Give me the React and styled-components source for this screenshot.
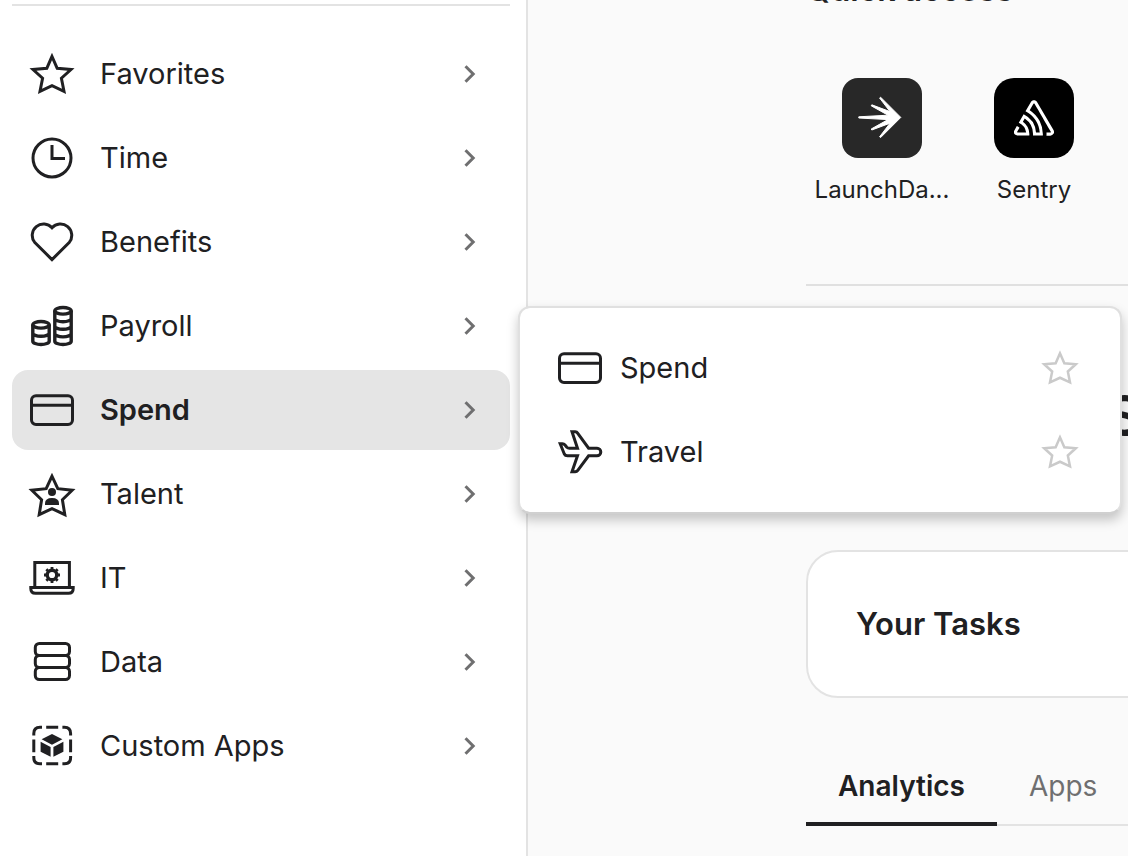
import React from "react";
import styled, { createGlobalStyle, css } from "styled-components";
import { SiSentry } from "react-icons/si";

const GlobalStyle = createGlobalStyle`
  *, *::before, *::after { box-sizing: border-box; }
  body {
    margin: 0;
    background: #fafafa;
    color: #202022;
    font-family: Inter, "Liberation Sans", sans-serif;
    font-size: 29px;
    line-height: 40px;
  }
  a { color: inherit; text-decoration: none; }
  button { font: inherit; color: inherit; background: none; border: 0; padding: 0; cursor: pointer; }
  h1, h2, ul { margin: 0; padding: 0; }
  ul { list-style: none; }
`;

const Page = styled.div`
  display: flex;
  min-height: 100vh;
  overflow: hidden;
`;

const Sidebar = styled.aside`
  flex: none;
  width: 528px;
  padding: 4px 16px 28px 12px;
  background: #fff;
  border-right: 2px solid #e3e3e3;
`;

const NavList = styled.ul`
  display: flex;
  flex-direction: column;
  gap: 4px;
  padding-top: 28px;
  border-top: 2px solid #e3e3e3;
`;

const NavItem = styled.li`
  position: relative;
`;

const NavButton = styled.button`
  display: flex;
  align-items: center;
  gap: 24px;
  width: 100%;
  height: 80px;
  padding: 0 16px;
  border-radius: 16px;
  text-align: left;
  ${(p) => p.$active && css`
    background: #e5e5e5;
    font-weight: 600;
  `}
`;

const Label = styled.span`
  flex: 1;
`;

const Glyph = styled.svg`
  flex: none;
  width: ${(p) => p.$size || 48}px;
  height: ${(p) => p.$size || 48}px;
  fill: none;
  stroke: currentColor;
  stroke-width: 3;
`;

const Chevron = styled(Glyph)`
  color: #6f6f70;
`;

const Flyout = styled.ul`
  position: absolute;
  z-index: 2;
  top: -64px;
  left: calc(100% + 8px);
  width: 604px;
  display: flex;
  flex-direction: column;
  gap: 4px;
  padding: 20px 16px;
  background: #fff;
  background-clip: padding-box;
  border: 2px solid #e0e0e0;
  border-bottom-color: #d0d0d0;
  border-radius: 12px;
  box-shadow: 0 6px 12px rgba(0, 0, 0, 0.22);
`;

const FlyoutItem = styled.li`
  display: flex;
  align-items: center;
  height: 80px;
  padding: 0 24px 0 20px;
`;

const FlyoutLink = styled.a`
  flex: 1;
  display: flex;
  align-items: center;
  gap: 16px;
`;

const StarButton = styled.button`
  display: flex;
  color: #cacaca;
`;

const Main = styled.main`
  flex: 0 0 100%;
  margin-top: -30px;
  padding-left: 278px;
`;

const SectionTitle = styled.h2`
  font-size: 32px;
  line-height: 40px;
  font-weight: 600;
`;

const AppGrid = styled.div`
  display: flex;
  padding: 68px 0 78px;
  border-bottom: 2px solid #e0e0e0;
`;

const AppLink = styled.a`
  display: flex;
  flex-direction: column;
  align-items: center;
  gap: 16px;
  width: 152px;
`;

const AppTile = styled.span`
  display: flex;
  align-items: center;
  justify-content: center;
  width: 80px;
  height: 80px;
  color: #fff;
  background: ${(p) => p.$color};
  border-radius: ${(p) => p.$radius}px;
`;

const AppName = styled.span`
  font-size: 24px;
  line-height: 32px;
  white-space: nowrap;
`;

const PageTitle = styled.h1`
  padding: 98px 0 102px 300px;
  font-size: 56px;
  line-height: 64px;
  font-weight: 600;
`;

const Card = styled.section`
  padding: 48px;
  background: #fff;
  border: 2px solid #e3e3e3;
  border-radius: 32px;
`;

const CardTitle = styled.h2`
  font-size: 31px;
  line-height: 48px;
  font-weight: 600;
`;

const Tabs = styled.div`
  display: flex;
  margin-top: 52px;
  box-shadow: inset 0 -2px #e3e3e3;
`;

const Tab = styled.button`
  padding: 16px 32px;
  border-bottom: 4px solid ${(p) => (p.$active ? "#202022" : "transparent")};
  color: ${(p) => (p.$active ? "#202022" : "#6f6f70")};
  font-size: 28px;
  font-weight: ${(p) => (p.$active ? 600 : 400)};
`;

const Icon = ({ size, children }) => (
  <Glyph viewBox="0 0 48 48" $size={size} aria-hidden="true">{children}</Glyph>
);

const STAR =
  "M24 6.4 L18.8 18.3 L5 19.5 L14.6 28.2 L12 41.3 L24 35.7 L36 41.3 L33.4 28.2 L43 19.5 L29.2 18.3 Z";

const StarIcon = ({ size }) => (
  <Icon size={size}><path d={STAR} /></Icon>
);

const ClockIcon = () => (
  <Icon>
    <circle cx="24" cy="24" r="19" />
    <path d="M24 11 V24.5 H37" />
  </Icon>
);

const HeartIcon = () => (
  <Icon>
    <path d="M24 41.6 L6.6 24.2 A11.3 11.3 0 0 1 24 9.8 A11.3 11.3 0 0 1 41.4 24.2 Z" />
  </Icon>
);

const CoinsIcon = () => (
  <Icon>
    <g strokeWidth="3.4">
      <ellipse cx="13" cy="22.8" rx="8.2" ry="3.3" />
      <path d="M4.8 22.8 V39.2 A8.2 3.3 0 0 0 21.2 39.2 V22.8 M4.8 31 A8.2 3.3 0 0 0 21.2 31" />
      <ellipse cx="35" cy="8.8" rx="8.2" ry="3.3" />
      <path d="M26.8 8.8 V39.2 A8.2 3.3 0 0 0 43.2 39.2 V8.8 M26.8 16.4 A8.2 3.3 0 0 0 43.2 16.4 M26.8 24 A8.2 3.3 0 0 0 43.2 24 M26.8 31.6 A8.2 3.3 0 0 0 43.2 31.6" />
    </g>
  </Icon>
);

const CardIcon = () => (
  <Icon>
    <rect x="3.5" y="9.8" width="41" height="28.6" rx="4.5" />
    <path d="M3.5 19.3 H44.5" />
  </Icon>
);

const TalentIcon = () => (
  <Icon>
    <path d="M24 6.2 L18.2 18.7 L3.8 20.2 L13.6 29.8 L11.2 44.6 L24 38.6 L36.8 44.6 L34.4 29.8 L44.2 20.2 L29.8 18.7 Z" />
    <circle cx="24" cy="22" r="4" fill="currentColor" stroke="none" />
    <path d="M17 35 V33.5 Q17 28 24 28 Q31 28 31 33.5 V35 Z" fill="currentColor" stroke="none" />
  </Icon>
);

const LaptopIcon = () => (
  <Icon>
    <path d="M6.8 33 V8.5 H41.4 V33" />
    <path d="M2.8 33.5 H45.2 V34.5 Q45.2 39.3 40.5 39.3 H7.5 Q2.8 39.3 2.8 34.5 Z" />
    <circle cx="24" cy="21" r="4.8" strokeWidth="3.4" />
    {[0, 45, 90, 135].map((angle) => (
      <path key={angle} d="M24 13 V16 M24 26 V29" transform={`rotate(${angle} 24 21)`} strokeWidth="2.8" />
    ))}
  </Icon>
);

const DataIcon = () => (
  <Icon>
    <rect x="7.3" y="5.5" width="34.2" height="12" rx="4" />
    <rect x="7.3" y="17.5" width="34.2" height="12" rx="4" />
    <rect x="7.3" y="29.5" width="34.2" height="12" rx="4" />
  </Icon>
);

const CustomAppsIcon = () => (
  <Icon>
    <path d="M5.8 13.5 V11.5 Q5.8 5.3 12 5.3 H14 M18.2 5.3 H30.2 M34.4 5.3 H36.4 Q42.6 5.3 42.6 11.5 V13.5 M42.6 17.5 V30.2 M42.6 34 V35.5 Q42.6 41.7 36.4 41.7 H34.4 M30.2 41.7 H18.2 M14 41.7 H12 Q5.8 41.7 5.8 35.5 V34 M5.8 30.2 V17.5" />
    <path
      d="M24 12 L34.4 17.3 L24 22.7 L13.6 17.3 Z M12.6 19.7 L22.6 25 V34.7 L12.6 29.7 Z M35.4 19.7 L25.4 25 V34.7 L35.4 29.7 Z"
      fill="currentColor"
      stroke="none"
    />
  </Icon>
);

const PlaneIcon = () => (
  <Icon>
    <path d="M16 3.8 H19.2 Q20.8 3.8 21.8 5.4 L32.6 20.2 H41 A3.8 3.8 0 0 1 41 27.8 H32.6 L21.8 42.4 Q20.8 43.8 19.2 43.8 H16 L21.5 27.8 H11.5 Q9.2 27.8 8.3 26 L4.2 15.8 H6.4 Q8 15.8 9 17 L10.8 19.2 Q11.8 20.2 13.4 20.2 H21.5 Z" />
  </Icon>
);

const ChevronIcon = () => (
  <Chevron viewBox="0 0 48 48" aria-hidden="true">
    <path d="M19.5 16.2 L27.2 24 L19.5 31.8" />
  </Chevron>
);

const LaunchDarklyLogo = () => (
  <Glyph viewBox="0 0 80 80" $size={80} aria-hidden="true">
    <path
      d="M58.8 39.4 L38.6 19.2 L37.6 20 L48 33.6 L29.8 26.8 L29.2 27.8 L46 37.2 L16.8 38.8 V40 L46 41.6 L29.2 51 L29.8 52 L48 45.2 L37.6 58.8 L38.6 59.6 Z"
      fill="currentColor"
      strokeWidth="1"
      strokeLinejoin="round"
    />
  </Glyph>
);

const NAV = [
  { label: "Favorites", icon: StarIcon },
  { label: "Time", icon: ClockIcon },
  { label: "Benefits", icon: HeartIcon },
  { label: "Payroll", icon: CoinsIcon },
  {
    label: "Spend",
    icon: CardIcon,
    children: [
      { label: "Spend", icon: CardIcon },
      { label: "Travel", icon: PlaneIcon },
    ],
  },
  { label: "Talent", icon: TalentIcon },
  { label: "IT", icon: LaptopIcon },
  { label: "Data", icon: DataIcon },
  { label: "Custom Apps", icon: CustomAppsIcon },
];

export default function App() {
  return (
    <>
      <GlobalStyle />
      <Page>
        <Sidebar>
          <nav>
            <NavList>
              {NAV.map(({ label, icon: ItemIcon, children }) => (
                <NavItem key={label}>
                  <NavButton type="button" $active={!!children} aria-expanded={!!children}>
                    <ItemIcon />
                    <Label>{label}</Label>
                    <ChevronIcon />
                  </NavButton>
                  {children && (
                    <Flyout>
                      {children.map(({ label: name, icon: ChildIcon }) => (
                        <FlyoutItem key={name}>
                          <FlyoutLink href="#">
                            <ChildIcon />
                            <Label>{name}</Label>
                          </FlyoutLink>
                          <StarButton type="button" aria-label={`Favorite ${name}`}>
                            <StarIcon size={40} />
                          </StarButton>
                        </FlyoutItem>
                      ))}
                    </Flyout>
                  )}
                </NavItem>
              ))}
            </NavList>
          </nav>
        </Sidebar>
        <Main>
          <SectionTitle>Quick access</SectionTitle>
          <AppGrid>
            <AppLink href="#">
              <AppTile $color="#282828" $radius={16}><LaunchDarklyLogo /></AppTile>
              <AppName>LaunchDa...</AppName>
            </AppLink>
            <AppLink href="#">
              <AppTile $color="#000" $radius={20}><SiSentry size={40} /></AppTile>
              <AppName>Sentry</AppName>
            </AppLink>
          </AppGrid>
          <PageTitle>S</PageTitle>
          <Card>
            <CardTitle>Your Tasks</CardTitle>
          </Card>
          <Tabs role="tablist">
            <Tab type="button" role="tab" aria-selected="true" $active>Analytics</Tab>
            <Tab type="button" role="tab" aria-selected="false">Apps</Tab>
          </Tabs>
        </Main>
      </Page>
    </>
  );
}
